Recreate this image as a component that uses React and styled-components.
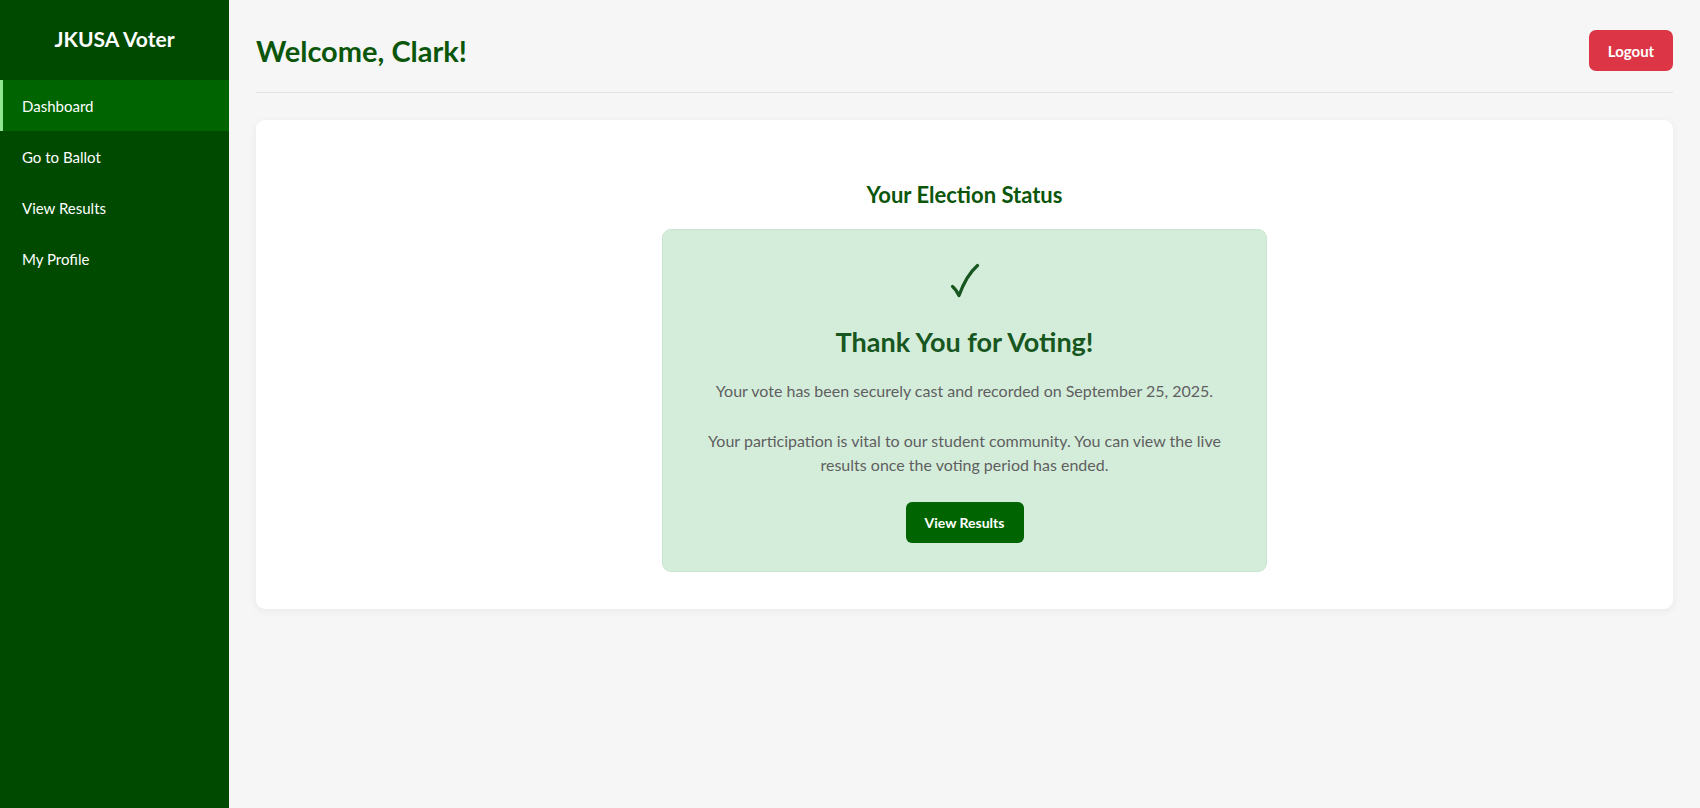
import styled, { createGlobalStyle } from 'styled-components';

const GlobalStyle = createGlobalStyle`
  * {
    box-sizing: border-box;
  }
  body {
    margin: 0;
    font-family: Lato, 'Open Sans', sans-serif;
    background: #f6f6f6;
  }
`;

const navItems = ['Dashboard', 'Go to Ballot', 'View Results', 'My Profile'];

const App = () => {
  return (
    <>
      <GlobalStyle />
      <Layout>
        <Sidebar>
          <Brand>JKUSA Voter</Brand>
          <Nav>
            {navItems.map((item, i) => (
              <NavItem
                key={item}
                $active={i === 0}
              >
                {item}
              </NavItem>
            ))}
          </Nav>
        </Sidebar>

        <Main>
          <Header>
            <Welcome>Welcome, Clark!</Welcome>
            <LogoutButton>Logout</LogoutButton>
          </Header>

          <Card>
            <CardTitle>Your Election Status</CardTitle>
            <StatusBox>
              <CheckMark
                viewBox="0 0 30 36"
                aria-hidden="true"
              >
                <path d="M2.5 23.5 C5 25.5 7 28.5 9 32.5 C13.5 20 19 10 27.5 2.5" />
              </CheckMark>
              <ThankYou>Thank You for Voting!</ThankYou>
              <StatusText>Your vote has been securely cast and recorded on September 25, 2025.</StatusText>
              <StatusText $gap={26}>
                Your participation is vital to our student community. You can view the live results once the voting
                period has ended.
              </StatusText>
              <ResultsButton>View Results</ResultsButton>
            </StatusBox>
          </Card>
        </Main>
      </Layout>
    </>
  );
};

const Layout = styled.div`
  display: flex;
  min-height: 100vh;
`;

const Sidebar = styled.aside`
  width: 229px;
  flex-shrink: 0;
  background: #004a00;
  color: #ffffff;
`;

const Brand = styled.div`
  height: 80px;
  display: flex;
  align-items: center;
  justify-content: center;
  padding-bottom: 4px;
  font-size: 21px;
  font-weight: 700;
`;

const Nav = styled.nav`
  display: flex;
  flex-direction: column;
`;

const NavItem = styled.a`
  display: flex;
  align-items: center;
  height: 51px;
  padding-left: 19px;
  font-size: 15px;
  color: #ffffff;
  cursor: pointer;
  background: ${(p) => (p.$active ? '#006400' : 'transparent')};
  border-left: 3px solid ${(p) => (p.$active ? '#8fe88f' : 'transparent')};
`;

const Main = styled.main`
  flex: 1;
  padding: 0 27px 0 27px;
`;

const Header = styled.header`
  display: flex;
  align-items: center;
  justify-content: space-between;
  height: 93px;
  padding-top: 9px;
  border-bottom: 1px solid #e2e2e2;
`;

const Welcome = styled.h1`
  margin: 0;
  font-size: 29px;
  font-weight: 700;
  color: #0b560b;
`;

const LogoutButton = styled.button`
  width: 84px;
  height: 41px;
  border: none;
  border-radius: 7px;
  background: #dc3545;
  color: #ffffff;
  font-family: inherit;
  font-size: 15px;
  font-weight: 700;
  cursor: pointer;
`;

const Card = styled.section`
  margin-top: 27px;
  background: #ffffff;
  border-radius: 9px;
  box-shadow: 0 2px 8px rgba(0, 0, 0, 0.06);
  padding: 62px 32px 37px;
  display: flex;
  flex-direction: column;
  align-items: center;
`;

const CardTitle = styled.h3`
  margin: 0 0 21px;
  font-size: 22px;
  line-height: 26px;
  font-weight: 700;
  color: #0b560b;
`;

const StatusBox = styled.div`
  width: 605px;
  background: #d4eddb;
  border: 1px solid #c8e6cf;
  border-radius: 9px;
  padding: 33px 32px 28px;
  display: flex;
  flex-direction: column;
  align-items: center;
  text-align: center;
`;

const CheckMark = styled.svg`
  width: 30px;
  height: 36px;
  fill: none;
  stroke: #17571f;
  stroke-width: 3.3;
  stroke-linecap: round;
  stroke-linejoin: round;
`;

const ThankYou = styled.h2`
  margin: 27px 0 0;
  font-size: 27px;
  line-height: 32px;
  font-weight: 700;
  color: #17571f;
`;

const StatusText = styled.p`
  margin: ${(p) => p.$gap || 21}px 0 0;
  font-size: 16px;
  line-height: 24px;
  color: #5f5f5f;
`;

const ResultsButton = styled.button`
  margin-top: 25px;
  width: 118px;
  height: 41px;
  border: none;
  border-radius: 6px;
  background: #006400;
  color: #ffffff;
  font-family: inherit;
  font-size: 14px;
  font-weight: 700;
  cursor: pointer;
`;

export default App;
